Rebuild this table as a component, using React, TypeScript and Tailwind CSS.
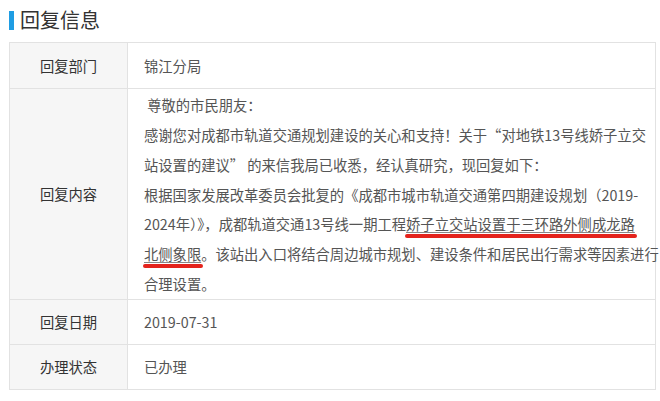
const font = "font-['Microsoft_YaHei','Noto_Sans_CJK_SC',sans-serif]";

function Marked({ children }: { children: React.ReactNode }) {
  return (
    <span className="relative underline decoration-[#888] underline-offset-[2px]">
      {children}
      <span className="absolute -left-px -right-[2px] top-full mt-[-0.5px] h-[4px] rounded-full bg-[#e4231c]" />
    </span>
  );
}

function Row({ label, children, className = "" }: { label: string; children: React.ReactNode; className?: string }) {
  return (
    <div className={`flex border-t border-[#e2e2e2] first:border-t-0 ${className}`}>
      <div className="w-[118px] shrink-0 flex items-center justify-center bg-[#f6f6f6] border-r border-[#e2e2e2] text-[#333]">
        {label}
      </div>
      <div className="flex-1 flex items-center pl-4 text-[#555]">{children}</div>
    </div>
  );
}

export default function App() {
  return (
    <div className={`w-[660px] h-[401px] bg-white ${font} text-[14.3px]`}>
      {/* Title */}
      <div className="flex items-center h-[42px] pl-[9px] pb-[2px]">
        <span className="w-[5px] h-[19px] bg-[#1f9de3] mr-[6px]" />
        <span className="text-[20px] text-[#333] leading-none">回复信息</span>
      </div>

      {/* Table */}
      <div className="ml-[9px] w-[647px] border border-[#e2e2e2]">
        <Row label="回复部门" className="h-[45px]">锦江分局</Row>
        <Row label="回复内容" className="h-[211px]">
          <div className="leading-[29.8px] whitespace-nowrap pt-px">
            <div>&nbsp;尊敬的市民朋友：</div>
            <div>感谢您对成都市轨道交通规划建设的关心和支持！关于“对地铁13号线娇子立交</div>
            <div>站设置的建议” 的来信我局已收悉，经认真研究，现回复如下：</div>
            <div>根据国家发展改革委员会批复的《成都市城市轨道交通第四期建设规划（2019-</div>
            <div>
              2024年）》，成都轨道交通13号线一期工程<Marked>娇子立交站设置于三环路外侧成龙路</Marked>
            </div>
            <div>
              <Marked>北侧象限</Marked>。该站出入口将结合周边城市规划、建设条件和居民出行需求等因素进行
            </div>
            <div>合理设置。</div>
          </div>
        </Row>
        <Row label="回复日期" className="h-[45px]">2019-07-31</Row>
        <Row label="办理状态" className="h-[45px]">已办理</Row>
      </div>
    </div>
  );
}
